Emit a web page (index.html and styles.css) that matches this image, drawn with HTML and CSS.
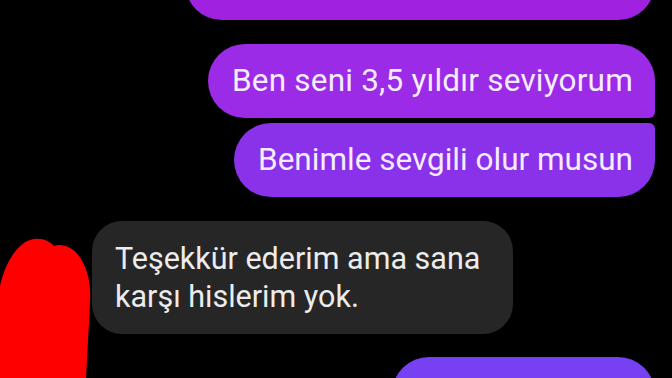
FILE: index.html
```html
<!DOCTYPE html>
<html lang="tr">
<head>
<meta charset="utf-8">
<link rel="stylesheet" href="styles.css">
</head>
<body>
<div class="chat">
  <div class="bubble out top-cut"></div>
  <div class="bubble out first">Ben seni 3,5 yıldır seviyorum</div>
  <div class="bubble out last">Benimle sevgili olur musun</div>
  <div class="bubble in">Teşekkür ederim ama sana karşı hislerim yok.</div>
  <div class="bubble out next"></div>
</div>
<svg class="scribble" width="96" height="142" viewBox="0 0 96 142">
  <path d="M0 48 C5 25 18 3 34 1 C44 0 50 4 54 8 C62 5 74 9 81 21 C88 33 91 46 90 63 C89 90 87 116 86 142 L0 142 Z" fill="#ff0000"/>
</svg>
</body>
</html>
```
FILE: styles.css
```css
html, body {
  margin: 0;
  padding: 0;
  background: #000;
  width: 672px;
  height: 378px;
  overflow: hidden;
}
body {
  position: relative;
  font-family: Roboto, "Noto Sans", "Liberation Sans", sans-serif;
}
.chat {
  display: flex;
  flex-direction: column;
  align-items: flex-end;
  padding-right: 17px;
}
.bubble {
  box-sizing: border-box;
  white-space: nowrap;
}
.out {
  height: 74px;
  line-height: 74px;
  font-size: 31.5px;
  padding: 0 22px 0 24px;
  border-radius: 37px;
  color: #f6ecff;
}
.top-cut {
  width: 470px;
  margin-top: -54px;
  background: #a022e0;
}
.first {
  margin-top: 24px;
  background: #9b2be6;
  border-bottom-right-radius: 6px;
  letter-spacing: 0.2px;
}
.last {
  margin-top: 5px;
  background: #8a31ea;
  border-top-right-radius: 6px;
}
.in {
  align-self: flex-start;
  margin-left: 92px;
  margin-top: 24px;
  width: 421px;
  white-space: normal;
  font-size: 30.5px;
  line-height: 38px;
  padding: 19px 23px 18px 23px;
  border-radius: 30px;
  background: #262626;
  color: #ececec;
}
.next {
  margin-top: 23px;
  width: 263px;
  background: #7740f2;
}
.scribble {
  position: absolute;
  left: 0;
  top: 238px;
}
```
